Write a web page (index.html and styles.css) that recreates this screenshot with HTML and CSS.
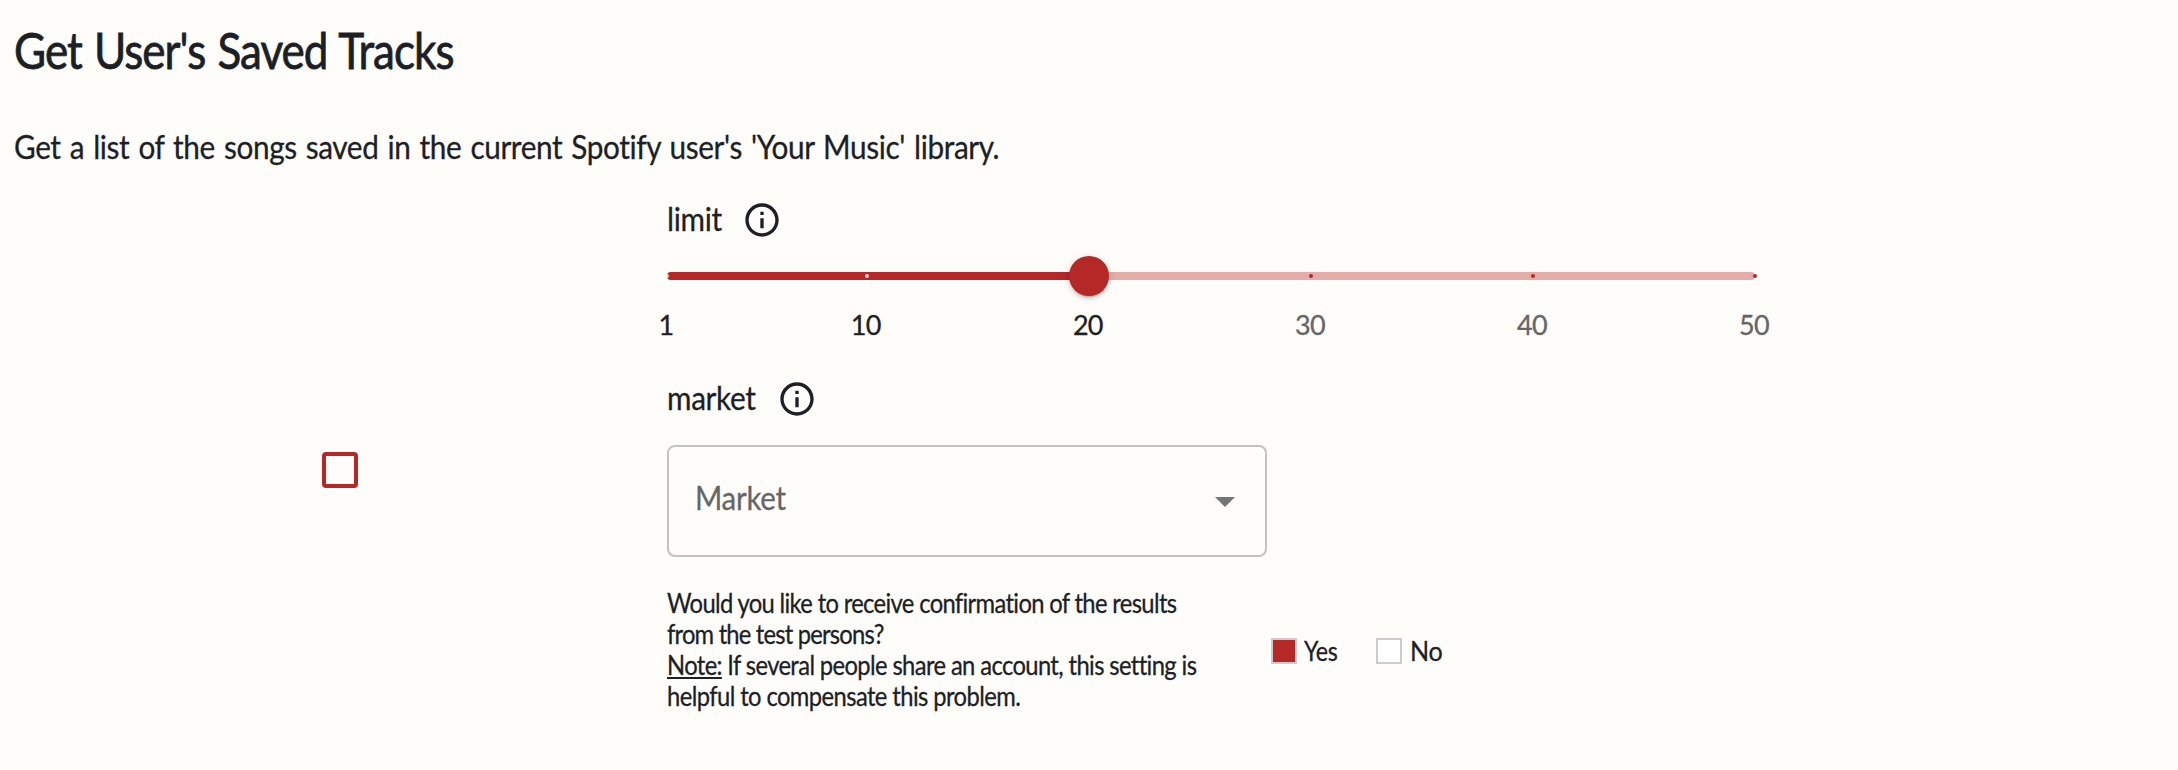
FILE: index.html
```
<!DOCTYPE html>
<html lang="en">
<head>
<meta charset="utf-8">
<title>Get User's Saved Tracks</title>
<link rel="stylesheet" href="styles.css">
</head>
<body>
<main class="page">
  <h1 class="title"><span class="title-text">Get User's Saved Tracks</span></h1>
  <p class="subtitle"><span class="subtitle-text">Get a list of the songs saved in the current Spotify user's 'Your Music' library.</span></p>
  <div class="layout">
    <div class="select-column"><span class="checkbox"></span></div>
    <div class="settings">
      <div class="setting-name limit"><span class="limit-text">limit</span>
        <svg class="info" viewBox="0 0 24 24"><path d="M11 7h2v2h-2zm0 4h2v6h-2zm1-9C6.48 2 2 6.48 2 12s4.48 10 10 10 10-4.48 10-10S17.52 2 12 2zm0 18c-4.41 0-8-3.59-8-8s3.59-8 8-8 8 3.59 8 8-3.59 8-8 8z"/></svg>
      </div>
      <div class="slider">
        <span class="rail"></span><span class="track"></span>
        <span class="mark on" style="left:0%"></span>
        <span class="mark on" style="left:18.367%"></span>
        <span class="mark" style="left:59.184%"></span>
        <span class="mark" style="left:79.592%"></span>
        <span class="mark" style="left:100%"></span>
        <span class="thumb"></span>
        <span class="tick active" style="left:0%">1</span>
        <span class="tick active" style="left:18.367%">10</span>
        <span class="tick active" style="left:38.776%">20</span>
        <span class="tick" style="left:59.184%">30</span>
        <span class="tick" style="left:79.592%">40</span>
        <span class="tick" style="left:100%">50</span>
      </div>
      <div class="setting-name market"><span class="market-text">market</span>
        <svg class="info" viewBox="0 0 24 24"><path d="M11 7h2v2h-2zm0 4h2v6h-2zm1-9C6.48 2 2 6.48 2 12s4.48 10 10 10 10-4.48 10-10S17.52 2 12 2zm0 18c-4.41 0-8-3.59-8-8s3.59-8 8-8 8 3.59 8 8-3.59 8-8 8z"/></svg>
      </div>
      <div class="select"><span class="select-text">Market</span>
        <svg class="arrow" viewBox="0 0 24 24"><path d="M7 10l5 5 5-5z"/></svg>
      </div>
      <div class="confirm">
        <p class="question">
          <span class="line l1">Would you like to receive confirmation of the results</span>
          <span class="line l2">from the test persons?</span>
          <span class="line l3"><u>Note:</u> If several people share an account, this setting is</span>
          <span class="line l4">helpful to compensate this problem.</span>
        </p>
        <div class="options">
          <div class="choice"><span class="box checked"></span><span class="option">Yes</span></div>
          <div class="choice"><span class="box"></span><span class="option no">No</span></div>
        </div>
      </div>
    </div>
  </div>
</main>
</body>
</html>
```
FILE: styles.css
```
* { box-sizing: border-box; }
body { margin: 0; background: #fffdf9; color: #1c1f26; font-family: Lato, "Open Sans", sans-serif; font-weight: 400; font-variant-ligatures: none; -webkit-text-stroke: .3px; }
.page { width: 2178px; height: 770px; overflow: hidden; padding: 19px 14px 0; }
.title { margin: 0; height: 62px; font-size: 50px; line-height: 62px; font-weight: 400; white-space: nowrap; -webkit-text-stroke: .8px; }
.title-text { display: inline-block; transform: scaleX(.88); transform-origin: left; letter-spacing: -1.1px; word-spacing: 2px; }
.subtitle { margin: 46px 0 0; height: 40px; font-size: 32px; line-height: 40px; white-space: nowrap; }
.subtitle-text { display: inline-block; transform: scaleX(.93); transform-origin: left; letter-spacing: -.43px; word-spacing: 2px; }
.layout { display: flex; margin-top: 31px; }
.select-column { width: 653px; padding: 254px 0 0 308px; }
.checkbox { display: block; width: 36px; height: 36px; border: 4px solid #b52828; border-radius: 4px; }
.settings { width: 1100px; }
.setting-name { display: flex; align-items: center; height: 40px; font-size: 32px; line-height: 38px; }
.setting-name span { flex: none; margin-bottom: 2px; transform: scaleX(.93); transform-origin: left; letter-spacing: -.35px; }
.limit { margin-top: 2px; }
.limit-text { width: 75px; }
.market-text { width: 110px; }
.info { width: 40px; height: 40px; fill: #1c1f26; }
.slider { position: relative; width: 1088px; height: 139px; }
.rail, .track { position: absolute; left: 0; top: 32px; height: 8px; width: 100%; border-radius: 4px; background: #b52828; opacity: .38; }
.track { width: 38.776%; opacity: 1; }
.mark { position: absolute; top: 34px; width: 4px; height: 4px; margin-left: -2px; border-radius: 2px; background: #b52828; }
.mark.on { background: #fffdf9; opacity: .8; }
.thumb { position: absolute; left: 38.776%; top: 16px; width: 40px; height: 40px; margin-left: -20px; border-radius: 50%; background: #b52828; box-shadow: 0 3px 2px -2px rgba(0,0,0,.2), 0 2px 4px rgba(0,0,0,.14), 0 1px 8px rgba(0,0,0,.12); }
.tick { position: absolute; top: 68px; margin-left: -1px; transform: translateX(-50%); font-size: 27px; line-height: 34px; letter-spacing: -.7px; color: #666; }
.tick.active { color: #20201f; }
.select { display: flex; align-items: center; justify-content: space-between; width: 600px; height: 112px; margin-top: 26px; padding: 0 16px 0 26px; border: 2px solid #c2c2c1; border-radius: 8px; font-size: 32px; color: #666; }
.select-text { padding-bottom: 8px; transform: scaleX(.92); transform-origin: left; letter-spacing: -.3px; }
.arrow { width: 48px; height: 48px; fill: #757574; }
.confirm { display: flex; align-items: center; margin-top: 30px; }
.question { width: 604px; margin: 0; font-size: 27px; line-height: 31px; }
.line { display: block; width: max-content; white-space: nowrap; transform: scaleX(.88); transform-origin: left; }
.l1 { letter-spacing: -.74px; }
.l2 { letter-spacing: -.9px; }
.l3 { letter-spacing: -.7px; }
.l4 { letter-spacing: -.66px; }
.question u { text-decoration-thickness: 2px; text-underline-offset: 2px; }
.options { display: flex; align-items: center; padding-top: 3px; font-size: 27px; line-height: 31px; }
.choice { display: flex; align-items: center; width: 105px; }
.box { width: 26px; height: 26px; border: 2px solid #ccc; background: #fff; }
.box.checked { background: #b52828; }
.option { margin-left: 7px; transform: scaleX(.86); transform-origin: left; letter-spacing: -.3px; }
.no { margin-left: 8px; transform: scaleX(.93); }
```
